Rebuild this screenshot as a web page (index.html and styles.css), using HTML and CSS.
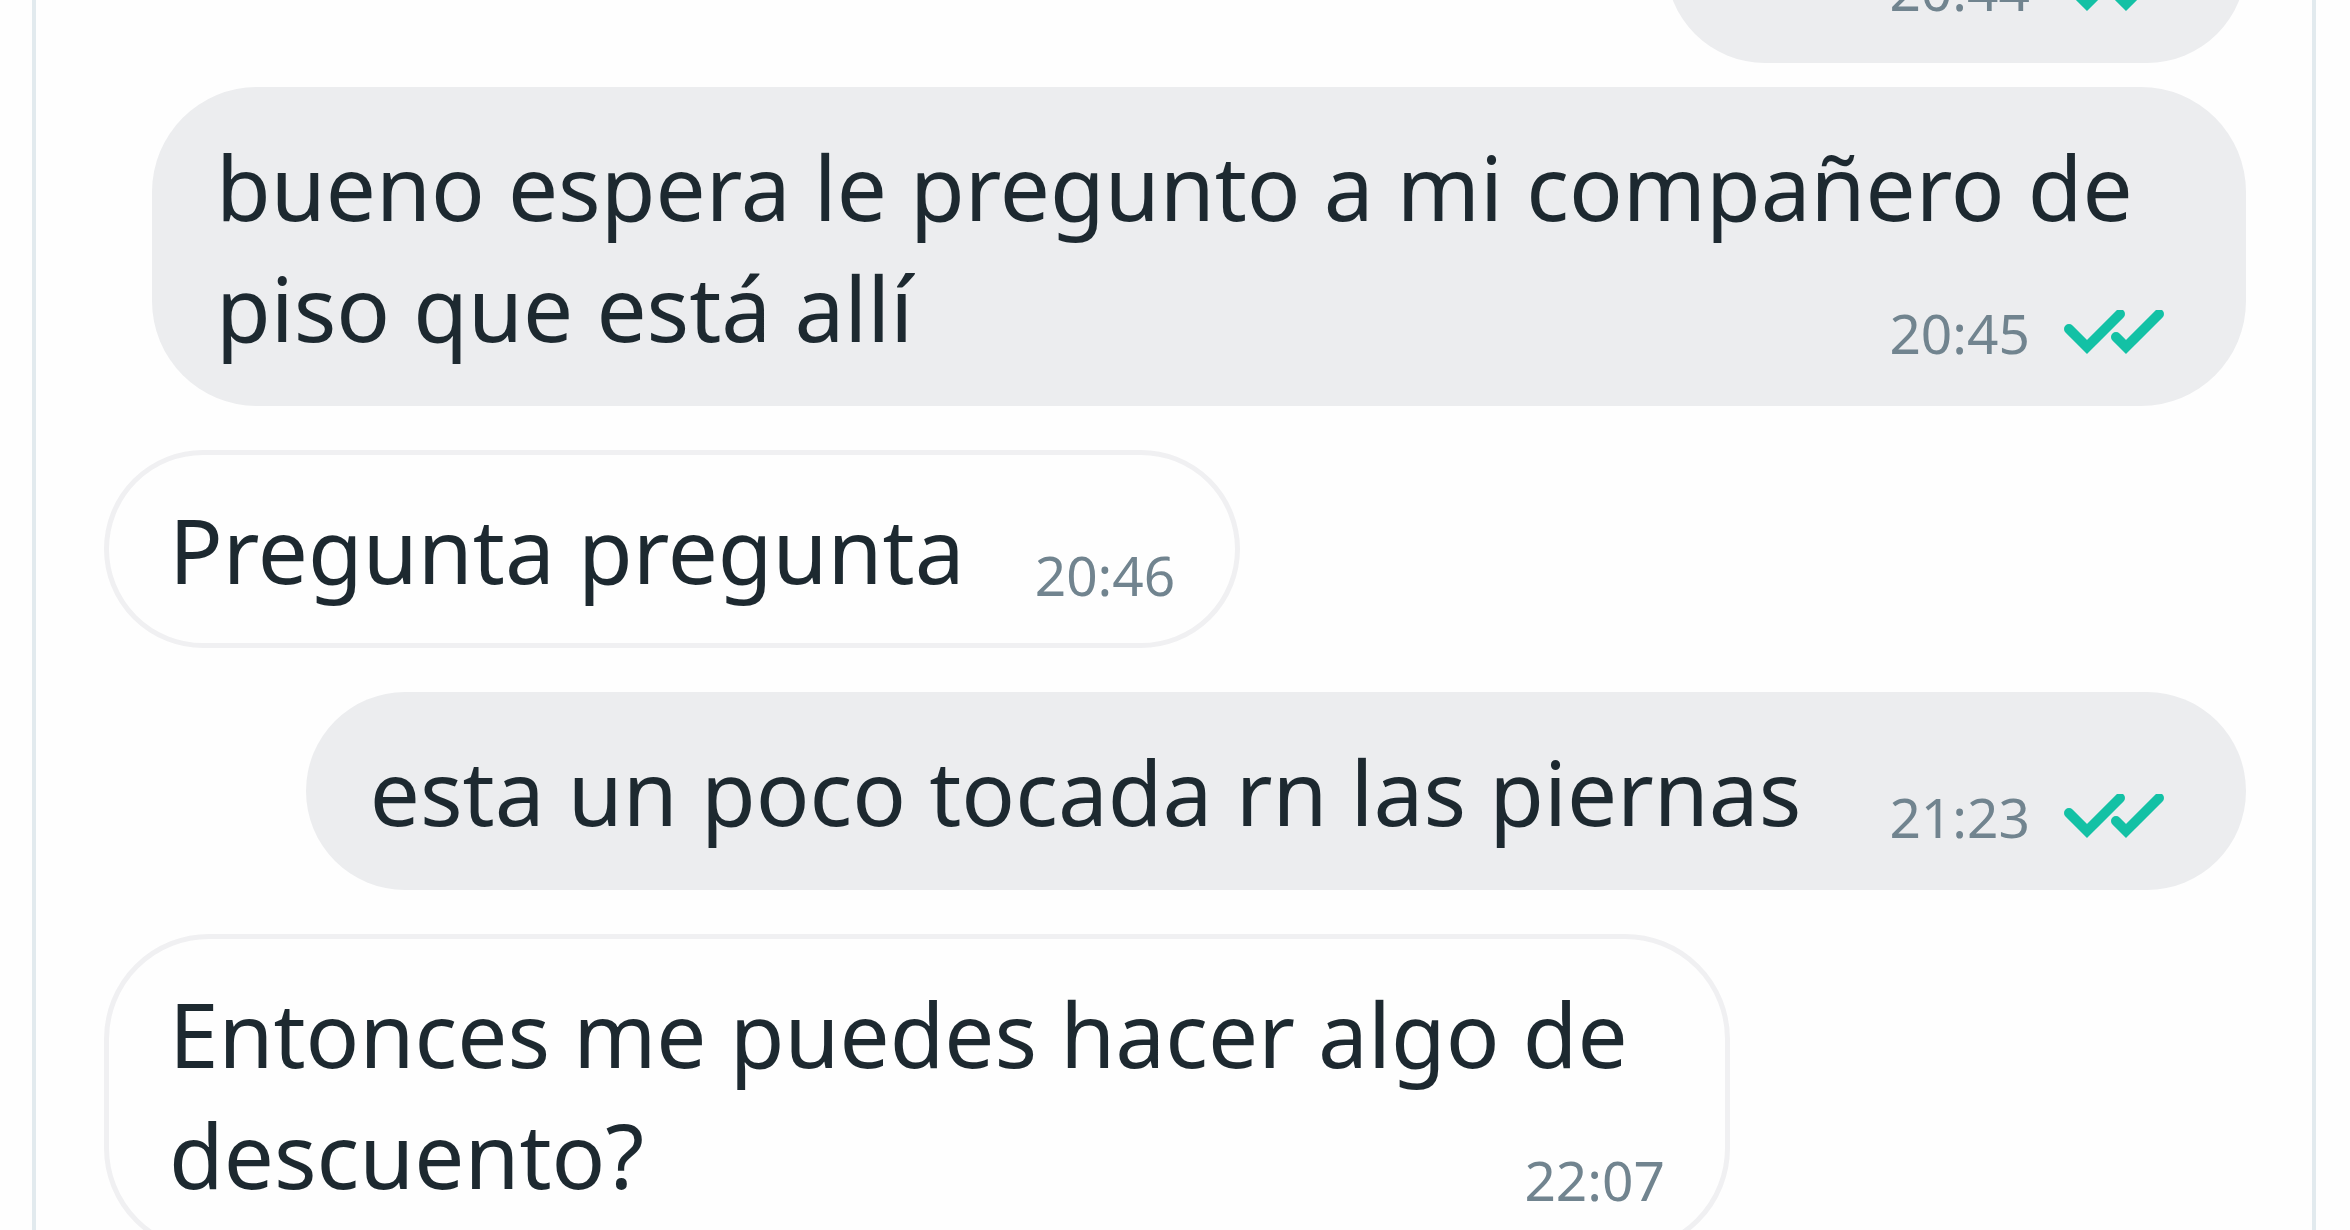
FILE: index.html
```html
<!DOCTYPE html>
<html lang="es">
<head>
<meta charset="utf-8">
<title>Chat</title>
<link rel="stylesheet" href="styles.css">
</head>
<body>
<svg class="defs" aria-hidden="true">
  <symbol id="read" viewBox="0 0 100 46">
    <path d="M5 19 L23 37 L56 4 M52 27 L62 37 L95 4"/>
  </symbol>
</svg>
<main class="chat">
  <div class="bubble sent">
    <p class="text">Sí <span class="meta"><time>20:44</time><svg class="ticks"><use href="#read"/></svg></span></p>
  </div>
  <div class="bubble sent follow wide">
    <p class="text">bueno espera le pregunto a mi compañero de piso que está allí <span class="meta"><time>20:45</time><svg class="ticks"><use href="#read"/></svg></span></p>
  </div>
  <div class="bubble received">
    <p class="text">Pregunta pregunta <span class="meta"><time>20:46</time></span></p>
  </div>
  <div class="bubble sent">
    <p class="text">esta un poco tocada rn las piernas <span class="meta"><time>21:23</time><svg class="ticks"><use href="#read"/></svg></span></p>
  </div>
  <div class="bubble received medium">
    <p class="text">Entonces me puedes hacer algo de descuento? <span class="meta"><time>22:07</time></span></p>
  </div>
</main>
</body>
</html>
```
FILE: styles.css
```css
* {
  box-sizing: border-box;
}

body {
  margin: 0;
  height: 100vh;
  padding: 0 34px 0 32px;
  overflow: hidden;
  background: #fefefe;
  color: #1d2930;
  font-family: "Noto Sans", sans-serif;
}

.defs {
  position: absolute;
  width: 0;
  height: 0;
}

.chat {
  display: flex;
  flex-direction: column;
  height: 100%;
  padding: 0 66px 0 68px;
  border: solid #e2eaee;
  border-width: 0 4px;
  overflow: hidden;
}

.bubble {
  flex: none;
  margin-top: 44px;
  padding: 39px 64px 38px;
  border-radius: 105px;
}

.bubble:first-child {
  margin-top: -135px;
}

.bubble.follow {
  margin-top: 24px;
}

.sent {
  align-self: flex-end;
  background: #ecedef;
}

.received {
  align-self: flex-start;
  padding: 34px 60px 33px;
  border: 5px solid #f0f0f2;
}

.wide {
  max-width: 2094px;
}

.medium {
  max-width: 1626px;
}

.text {
  display: flow-root;
  margin: 0;
  font-size: 89px;
  line-height: 121px;
}

.meta {
  float: right;
  display: flex;
  align-items: center;
  gap: 34px;
  margin: 51px 0 0 70px;
  color: #71848f;
  font-size: 55px;
  line-height: 70px;
}

.sent .meta {
  margin-left: 88px;
  margin-right: 18px;
}

.ticks {
  width: 100px;
  height: 46px;
  fill: none;
  stroke: #13c1a5;
  stroke-width: 10;
  stroke-linecap: round;
}
```
